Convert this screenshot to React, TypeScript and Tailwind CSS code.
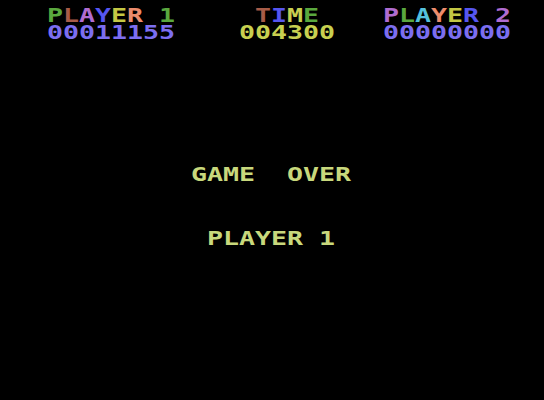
const FONT = "font-['DejaVu_Sans_Mono',monospace]";

type Colored = { ch: string; color: string };

// one 16px cell per character, like the 8x8 char grid doubled
function Cells({ items }: { items: Colored[] }) {
  return (
    <div className="flex h-4 leading-4">
      {items.map((c, i) => (
        <span
          key={i}
          className={`inline-block w-4 text-center text-[19px] font-bold scale-x-[1.4] ${FONT}`}
          style={{ color: c.color }}
        >
          {c.ch}
        </span>
      ))}
    </div>
  );
}

const tint = (text: string, colors: string[]) =>
  text.split("").map((ch, i) => ({ ch, color: colors[i % colors.length] }));

const GREEN = "#5aa83e";
const BROWN = "#a85c48";
const LILAC = "#b06cd0";
const BLUE = "#5656f0";
const OLIVE = "#c4c844";
const SALMON = "#ec8c6c";
const CYAN = "#54c0dc";
const SCORE = "#7c6ef0";
const YELLOW = "#c8d050";
const PALE = "#c8d87c";

export default function App() {
  const player1 = tint("PLAYER 1", [GREEN, BROWN, LILAC, BLUE, OLIVE, SALMON, GREEN, GREEN]);
  const player2 = tint("PLAYER 2", [LILAC, GREEN, CYAN, SALMON, OLIVE, BLUE, LILAC, LILAC]);
  const time = tint("TIME", [BROWN, BLUE, YELLOW, GREEN]);

  return (
    <div className="h-[400px] w-[544px] bg-black overflow-hidden">
      {/* score header */}
      <div className="flex pt-[7px] pl-[47px]">
        <div className="flex flex-col gap-[1px]">
          <Cells items={player1} />
          <Cells items={tint("00011155", [SCORE])} />
        </div>
        <div className="ml-[64px] flex flex-col items-center gap-[1px]">
          <Cells items={time} />
          <Cells items={tint("004300", [YELLOW])} />
        </div>
        <div className="ml-[48px] flex flex-col gap-[1px]">
          <Cells items={player2} />
          <Cells items={tint("00000000", [SCORE])} />
        </div>
      </div>

      {/* end of round message */}
      <div className="mt-[126px] flex flex-col items-center pr-[2px]">
        <Cells items={tint("GAME  OVER", [PALE])} />
        <div className="mt-[48px]">
          <Cells items={tint("PLAYER 1", [PALE])} />
        </div>
      </div>
    </div>
  );
}
